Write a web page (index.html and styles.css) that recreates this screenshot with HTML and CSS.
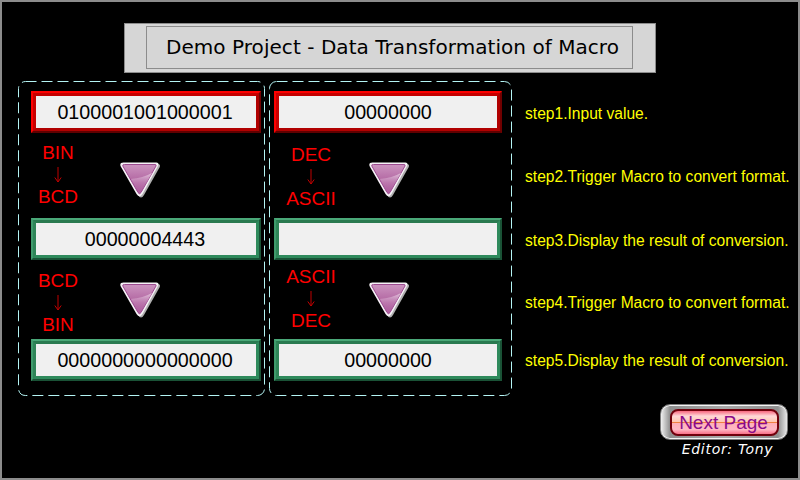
FILE: index.html
```html
<!DOCTYPE html>
<html lang="en">
<head>
  <meta charset="UTF-8" />
  <title>Data Transformation of Macro</title>
  <link rel="stylesheet" href="styles.css">
</head>
<body>

<svg class="defs" width="0" height="0">
  <defs>
    <linearGradient id="triFill" x1="0" y1="0" x2="0" y2="1">
      <stop offset="0" stop-color="#cc94c0" />
      <stop offset="0.45" stop-color="#b870a8" />
      <stop offset="1" stop-color="#b060a0" />
    </linearGradient>
    <linearGradient id="triShine" x1="0" y1="0" x2="0" y2="1">
      <stop offset="0" stop-color="#e8cce2" stop-opacity="0.9" />
      <stop offset="0.5" stop-color="#c488b8" stop-opacity="0.5" />
      <stop offset="1" stop-color="#b060a0" stop-opacity="0" />
    </linearGradient>
    <symbol id="tri" viewBox="0 0 40 36">
      <path d="M5 2 H38 Q41 2 39.500 5.500 L24 33 Q21 38 18 33 L2 5.500 Q1 2 5 2 Z" fill="#b0b0b0" />
      <path d="M3.500 0.500 H36.500 Q39.500 0.500 38 4 L22.500 32 Q19.500 36.500 16.500 32 L0.500 4 Q-0.500 0.500 3.500 0.500 Z" fill="#f6f2f6" />
      <path d="M4.500 2.500 H35 Q36.500 2.500 36 4 L21 30.500 Q19.500 33 18 30.500 L2.800 4 Q2.200 2.500 4.500 2.500 Z" fill="url(#triFill)" stroke="#9c4a90" stroke-width="1" />
      <path d="M11 17 Q23 16 32 11 L22 28.500 Q19.500 31.500 17.500 28 Z" fill="url(#triShine)" />
    </symbol>
    <symbol id="down" viewBox="0 0 8 16">
      <path d="M4 0 V15 M0.800 10.500 L4 15 L7.200 10.500" fill="none" stroke="#c00000" stroke-width="1" />
    </symbol>
  </defs>
</svg>

<div class="screen">
  <header class="title-box">
    <h1 class="title-frame">Demo Project - Data Transformation of Macro</h1>
  </header>

  <div class="board">
    <section class="panel panel-left">
      <svg class="dash-frame" width="247" height="315"><rect x="0.500" y="0.500" width="246" height="314" rx="7" /></svg>
      <div class="field field-red"><div class="field-value">0100001001000001</div></div>
      <div class="convert convert-first">
        <div class="convert-label label-bin-bcd"><span>BIN</span><svg class="arrow"><use href="#down" /></svg><span>BCD</span></div>
        <svg class="trigger"><use href="#tri" /></svg>
      </div>
      <div class="field field-green"><div class="field-value">00000004443</div></div>
      <div class="convert convert-second">
        <div class="convert-label label-bcd-bin"><span>BCD</span><svg class="arrow"><use href="#down" /></svg><span>BIN</span></div>
        <svg class="trigger"><use href="#tri" /></svg>
      </div>
      <div class="field field-green"><div class="field-value">0000000000000000</div></div>
    </section>

    <section class="panel panel-right">
      <svg class="dash-frame" width="243" height="315"><rect x="0.500" y="0.500" width="242" height="314" rx="7" /></svg>
      <div class="field field-red"><div class="field-value">00000000</div></div>
      <div class="convert convert-first">
        <div class="convert-label label-dec-ascii"><span>DEC</span><svg class="arrow"><use href="#down" /></svg><span>ASCII</span></div>
        <svg class="trigger"><use href="#tri" /></svg>
      </div>
      <div class="field field-green"><div class="field-value"></div></div>
      <div class="convert convert-second">
        <div class="convert-label label-ascii-dec"><span>ASCII</span><svg class="arrow"><use href="#down" /></svg><span>DEC</span></div>
        <svg class="trigger"><use href="#tri" /></svg>
      </div>
      <div class="field field-green"><div class="field-value">00000000</div></div>
    </section>

    <ul class="steps">
      <li>step1.Input value.</li>
      <li>step2.Trigger Macro to convert format.</li>
      <li>step3.Display the result of conversion.</li>
      <li>step4.Trigger Macro to convert format.</li>
      <li>step5.Display the result of conversion.</li>
    </ul>
  </div>

  <footer class="footer">
    <div class="next-btn"><div class="next-face">Next Page</div></div>
    <div class="editor">Editor: Tony</div>
  </footer>
</div>

</body>
</html>
```

FILE: styles.css
```css
* {
  box-sizing: border-box;
}

body {
  margin: 0;
  background-color: #000;
  font-family: "Liberation Sans", Arial, sans-serif;
}

.defs {
  display: block;
  height: 0;
}

.screen {
  width: 800px;
  height: 480px;
  border: 2px solid #8c8c8c;
  padding-top: 21px;
  overflow: hidden;
}

.title-box {
  width: 532px;
  height: 50px;
  margin-left: 122px;
  padding: 2px 22px 3px 21px;
  background-color: #d6d6d6;
  border: 1px solid #8c8c8c;
}

.title-frame {
  height: 100%;
  margin: 0;
  padding-left: 6px;
  border: 1px solid #8c8c8c;
  font-family: "DejaVu Sans", sans-serif;
  font-size: 20px;
  font-weight: normal;
  line-height: 41px;
  letter-spacing: 0.05px;
  text-align: center;
  color: #000;
}

.board {
  display: flex;
  gap: 4px;
  height: 314px;
  margin-top: 8px;
  margin-left: 16px;
}

.panel {
  position: relative;
  flex: none;
  display: grid;
  grid-template-rows: 42px 85px 42px 79px 42px;
  padding-top: 10px;
}

.panel-left {
  width: 247px;
  padding-left: 13px;
  padding-right: 4px;
}

.panel-left .field-value {
  padding-right: 2px;
}

.panel-right {
  width: 243px;
  padding-left: 5px;
  padding-right: 10px;
}

.dash-frame {
  position: absolute;
  top: 0;
  left: 0;
}

.dash-frame rect {
  fill: none;
  stroke: #b4f4f4;
  stroke-width: 1;
  stroke-dasharray: 11 5;
}

.field {
  border: 2px solid;
}

.field-value {
  height: 100%;
  border: 3px solid;
  background-color: #f0f0f0;
  font-size: 19.700px;
  line-height: 32px;
  text-align: center;
  color: #000;
}

.field-red {
  border-color: #ff0000 #700000 #600000 #ff0000;
}

.field-red .field-value {
  border-color: #c40000 #b00000 #b00000 #c80000;
}

.field-green {
  border-color: #4aa878 #1a5236 #1a5236 #3f9a6c;
}

.field-green .field-value {
  border-color: #2a7a50 #2f8a5c #2f8a5c #2f8558;
}

.convert {
  display: grid;
  align-items: start;
}

.convert-first .trigger {
  margin-top: 29px;
}

.convert-second .trigger {
  margin-top: 22px;
}

.panel-left .convert {
  grid-template-columns: 54px 40px;
  column-gap: 35px;
}

.panel-right .convert {
  grid-template-columns: 74px 40px;
  column-gap: 21px;
}

.convert-label {
  display: flex;
  flex-direction: column;
  align-items: center;
  font-size: 19px;
  line-height: 22px;
  color: #ff0000;
}

.label-bin-bcd {
  margin-top: 9px;
}

.label-dec-ascii {
  margin-top: 11px;
}

.label-bcd-bin {
  margin-top: 10px;
}

.label-ascii-dec {
  margin-top: 6px;
}

.arrow {
  width: 8px;
  height: 16px;
  margin: 3px 0;
}

.trigger {
  width: 40px;
  height: 36px;
}

.steps {
  flex: none;
  display: grid;
  grid-template-rows: 63px 64px 62px 58px 30px;
  margin: 0;
  padding: 18px 0 0 9px;
  list-style: none;
  font-size: 15.600px;
  line-height: 30px;
  color: #ffff00;
  white-space: nowrap;
}

.footer {
  display: flex;
  flex-direction: column;
  align-items: flex-end;
  margin-top: 9px;
  padding-right: 10px;
}

.next-btn {
  width: 128px;
  height: 36px;
  padding: 4px 8px 3px 9px;
  background: linear-gradient(90deg, #f0f0f0, #909090 9px, #a8a8a8 50%, #909090 calc(100% - 9px), #e8e8e8);
  border: 1px solid #7c7c7c;
  border-radius: 10px;
  box-shadow: inset 0 1px 0 #f4f4f4, inset 0 -1px 0 #f4f4f4;
}

.next-face {
  height: 100%;
  padding-right: 2px;
  background: linear-gradient(#f86880, #ffd8d8 22%, #ffc8b0 48%, #f08040 50%, #ffb0b8 53%, #ffb8c4 80%, #f87088);
  border: 2px solid #70000c;
  border-radius: 8px;
  font-size: 19px;
  line-height: 23px;
  text-align: center;
  color: #8a0a8a;
}

.editor {
  width: 128px;
  margin-top: 1px;
  padding-left: 7px;
  font-family: "DejaVu Sans", sans-serif;
  font-size: 14px;
  font-style: italic;
  line-height: 17px;
  letter-spacing: 0.7px;
  text-align: center;
  color: #fff;
}
```
